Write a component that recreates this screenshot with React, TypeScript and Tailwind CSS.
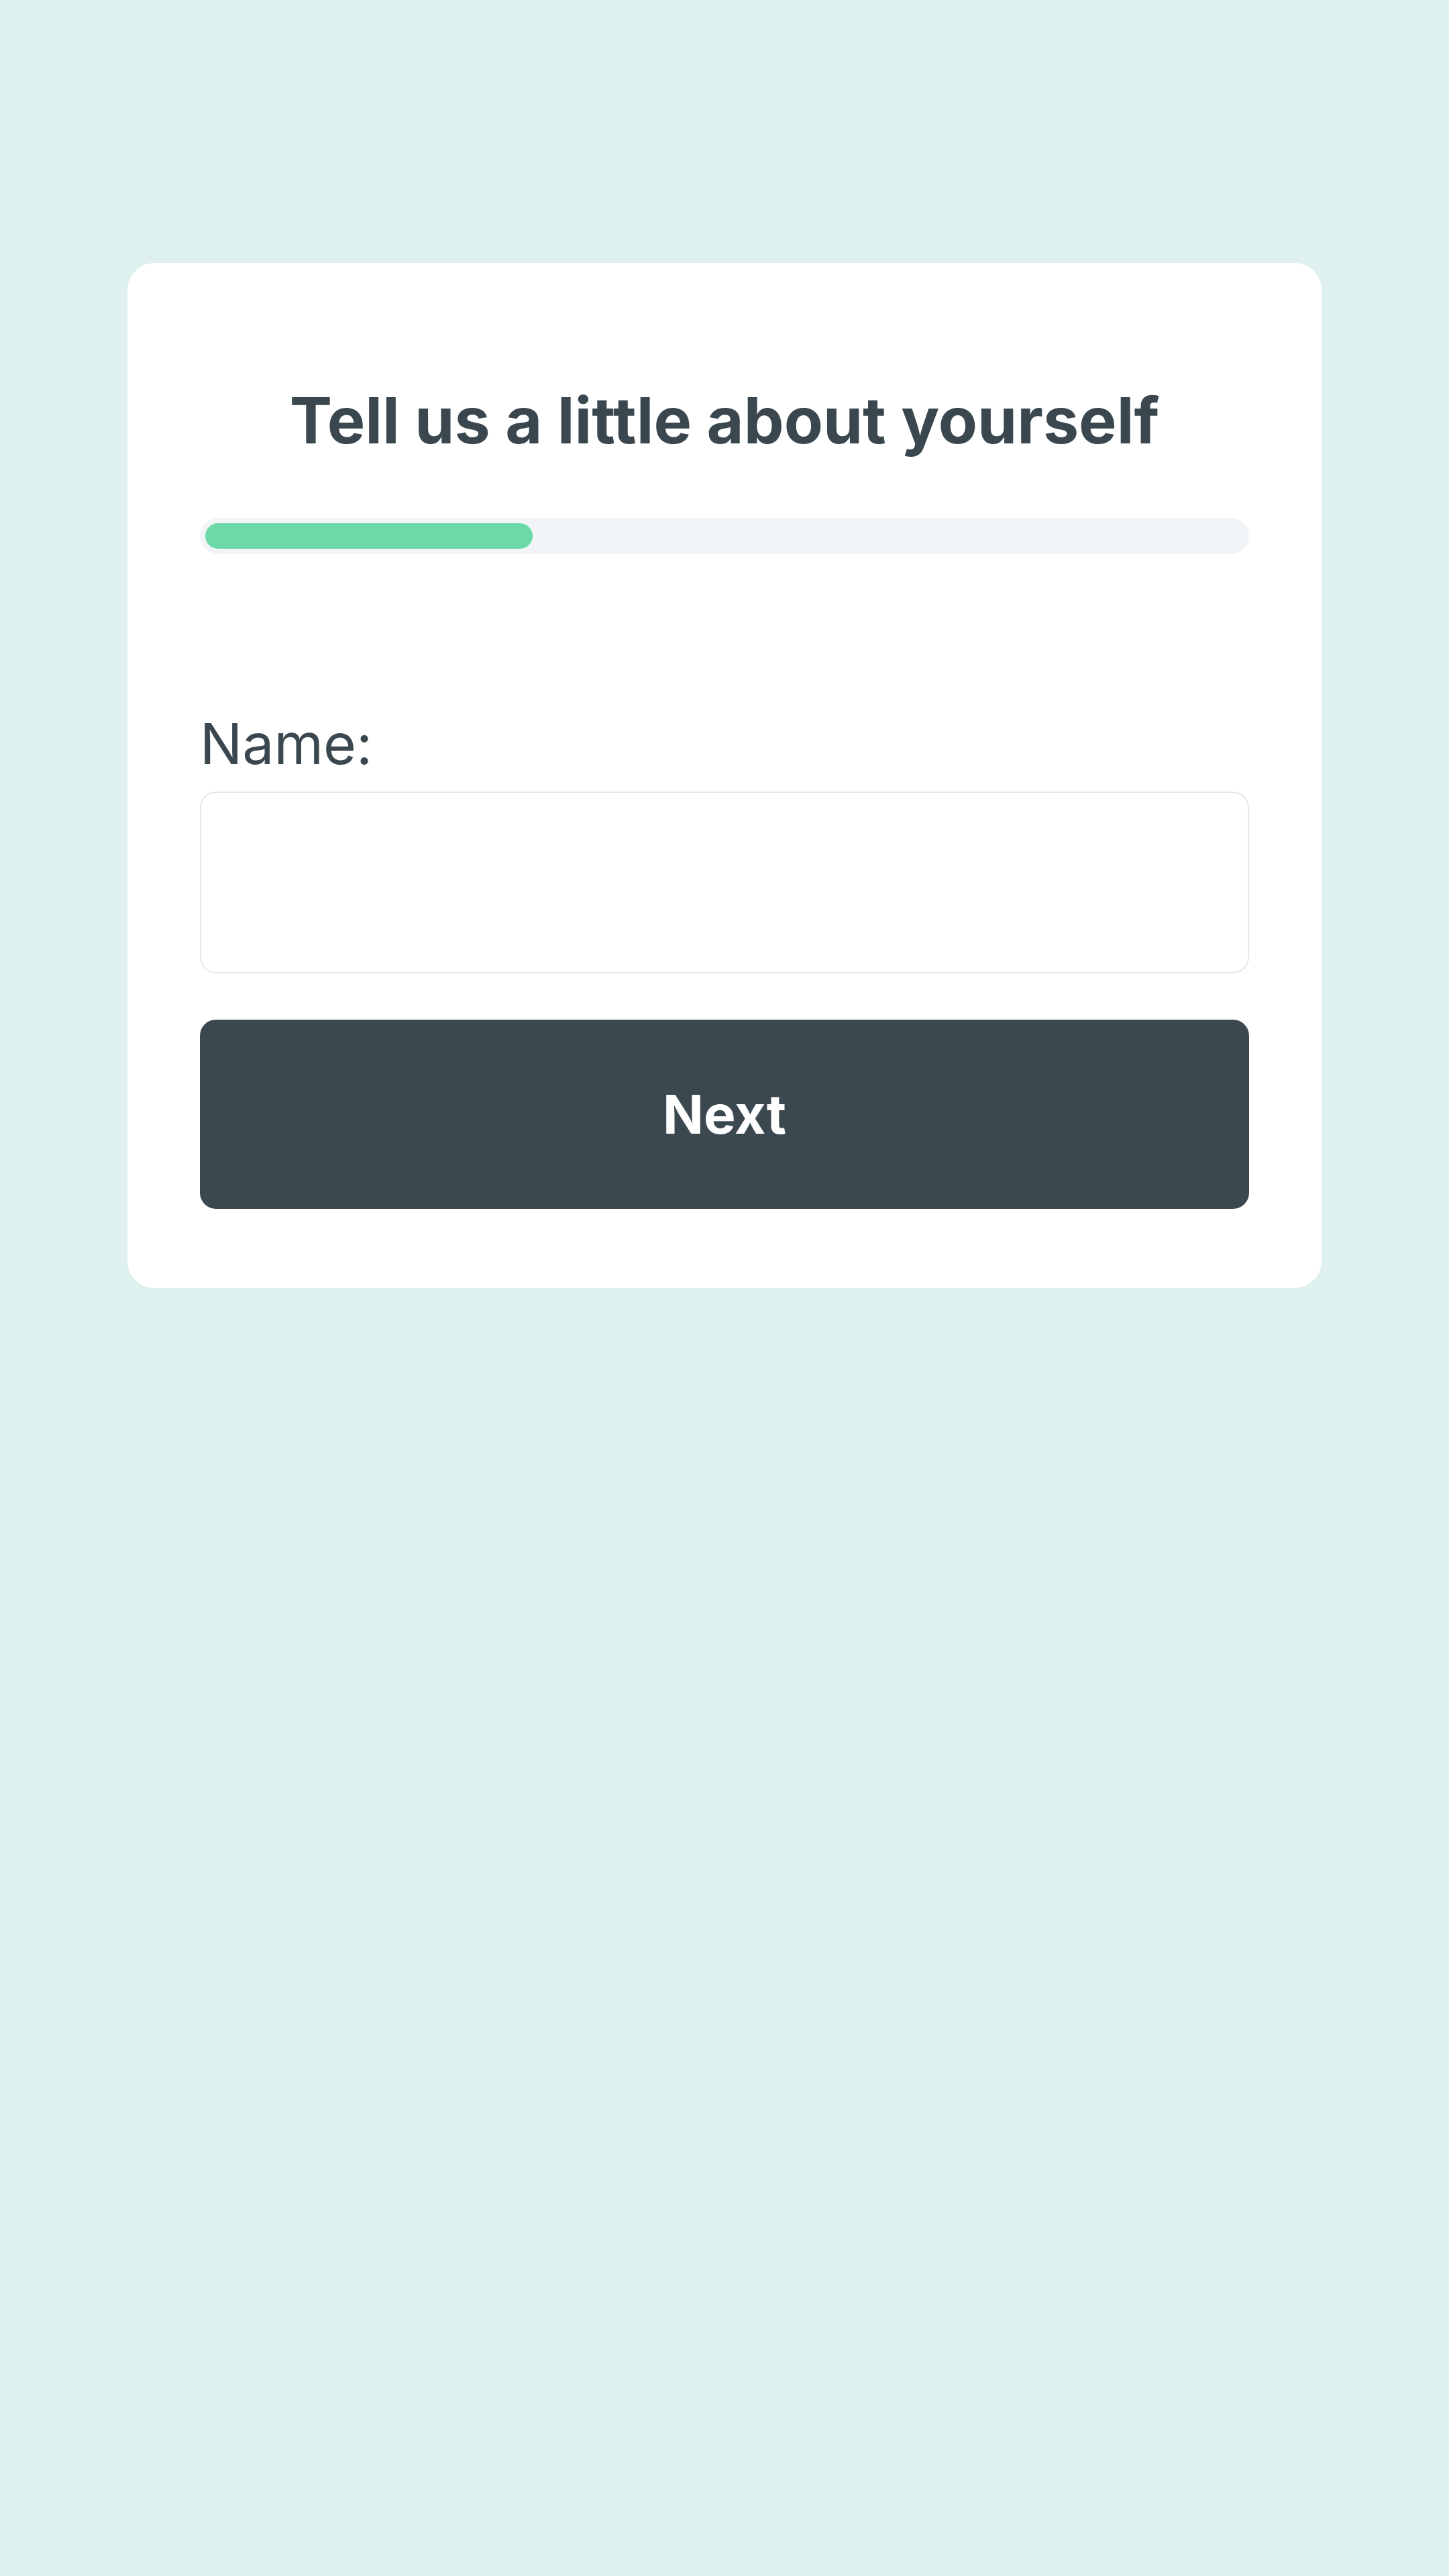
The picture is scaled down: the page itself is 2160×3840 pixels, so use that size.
import React, { useState } from 'react';

export default function App() {
  const [name, setName] = useState('');
  const progress = 31.5;

  return (
    <div className="min-h-[3840px] w-full bg-[#def1ef] pt-[392px] font-['Inter','Noto_Sans',sans-serif] text-[#3a474e]">
      <div className="mx-[190px] rounded-[40px] bg-white px-[108px] pt-[187px] pb-[118px]">
        <h1 className="text-center text-[95px] font-bold leading-none [font-variant-ligatures:none]">
          Tell us a little about yourself
        </h1>

        {/* progress */}
        <div className="mt-[98px] h-[54px] rounded-full bg-[#f1f5f8] p-[8px]">
          <div className="h-full rounded-full bg-[#6cd9a6]" style={{ width: `${progress}%` }}></div>
        </div>

        <label htmlFor="name" className="mt-[241px] block text-[84px] font-normal leading-none">
          Name:
        </label>
        <input
          id="name"
          value={name}
          onChange={(e) => setName(e.target.value)}
          className="mt-[29px] block h-[271px] w-full rounded-[24px] border-2 border-[#e2e8f0] bg-white px-[40px] text-[72px] outline-none"
        />

        <button className="mt-[69px] flex h-[282px] w-full items-center justify-center rounded-[24px] bg-[#3b484f] text-[80px] font-bold leading-none text-white">
          Next
        </button>
      </div>
    </div>
  );
}
